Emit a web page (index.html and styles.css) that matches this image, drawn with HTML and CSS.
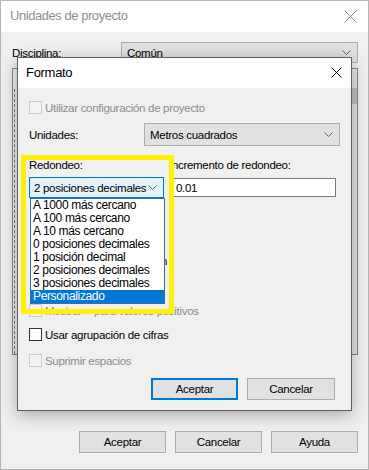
FILE: index.html
```html
<!DOCTYPE html>
<html lang="es">
<head>
<meta charset="utf-8">
<link rel="stylesheet" href="styles.css">
</head>
<body>
<div class="outer">
  <div class="titlebar">
    <span class="title">Unidades de proyecto</span>
    <svg class="oclose" width="13" height="13" viewBox="0 0 13 13"><path d="M0.5 0.5L12.5 12.5M12.5 0.5L0.5 12.5" stroke="#8a8a8a" stroke-width="1" fill="none"/></svg>
  </div>
  <div class="obody">
    <div class="orow">
      <span class="olabel">Disciplina:</span>
      <div class="combo ocombo"><span>Común</span>
        <svg class="chev" width="9" height="5" viewBox="0 0 9 5"><path d="M0.5 0.5L4.5 4.5L8.5 0.5" stroke="#606060" fill="none"/></svg>
      </div>
    </div>
    <div class="panel">
      <div class="tree"></div>
      <div class="scroll"><div class="thumb"></div></div>
    </div>
    <div class="obuttons">
      <div class="btn">Aceptar</div>
      <div class="btn">Cancelar</div>
      <div class="btn">Ayuda</div>
    </div>
  </div>

  <div class="dialog">
    <div class="dtitle">
      <span class="dtitle-text">Formato</span>
      <svg class="dclose" width="11" height="11" viewBox="0 0 11 11"><path d="M0.5 0.5L10.5 10.5M10.5 0.5L0.5 10.5" stroke="#000" stroke-width="1" fill="none"/></svg>
    </div>
    <div class="dbody">
      <div class="crow r1 disabled"><span class="cb"></span><span>Utilizar configuración de proyecto</span></div>
      <div class="urow">
        <span class="ulabel">Unidades:</span>
        <div class="combo ucombo"><span>Metros cuadrados</span>
          <svg class="chev" width="9" height="5" viewBox="0 0 9 5"><path d="M0.5 0.5L4.5 4.5L8.5 0.5" stroke="#606060" fill="none"/></svg>
        </div>
      </div>
      <div class="grid">
        <span class="glabel">Redondeo:</span>
        <span class="glabel glabel-right">Incremento de redondeo:</span>
        <div class="combo rcombo"><span>2 posiciones decimales</span>
          <svg class="chev" width="9" height="5" viewBox="0 0 9 5"><path d="M0.5 0.5L4.5 4.5L8.5 0.5" stroke="#606060" fill="none"/></svg>
        </div>
        <div class="input">0.01</div>
      </div>
      <div class="hidden-row"><span class="hidden-text">Símbolo de unidad: sin</span></div>
      <div class="crow r-mostrar disabled"><span class="cb"></span><span>Mostrar + para valores positivos</span></div>
      <div class="crow r-usar"><span class="cb"></span><span>Usar agrupación de cifras</span></div>
      <div class="crow r-sup disabled"><span class="cb"></span><span>Suprimir espacios</span></div>
      <div class="dbuttons">
        <div class="btn primary">Aceptar</div>
        <div class="btn">Cancelar</div>
      </div>
    </div>

    <div class="highlight"></div>
    <ul class="dropdown">
      <li>A 1000 más cercano</li>
      <li>A 100 más cercano</li>
      <li>A 10 más cercano</li>
      <li>0 posiciones decimales</li>
      <li>1 posición decimal</li>
      <li>2 posiciones decimales</li>
      <li>3 posiciones decimales</li>
      <li class="sel">Personalizado</li>
    </ul>
  </div>
</div>
</body>
</html>
```

FILE: styles.css
```css
* { box-sizing: border-box; }
html, body { margin: 0; padding: 0; background: #f0f0f0; }
body {
  font-family: "Liberation Sans", Arial, sans-serif;
  font-size: 11.5px;
  letter-spacing: -0.3px;
  color: #000;
}
.outer {
  position: relative;
  width: 369px;
  height: 470px;
  border: 1px solid #b5b5b5;
  background: #f0f0f0;
  display: flex;
  flex-direction: column;
}
.titlebar {
  height: 31px;
  background: #fff;
  display: flex;
  align-items: center;
  padding: 0 11px 0 9px;
}
.title {
  font-size: 13px;
  letter-spacing: -0.45px;
  color: #8f8f8f;
  flex: 1;
  margin-top: -2px;
}
.oclose { margin-top: -1px; }
.obody {
  flex: 1;
  padding: 10px 10px 0 11px;
  display: flex;
  flex-direction: column;
}
.orow {
  display: flex;
  align-items: center;
  height: 21px;
}
.olabel { width: 109px; }
.combo {
  display: flex;
  align-items: center;
  justify-content: space-between;
  background: #e1e1e1;
  border: 1px solid #adadad;
  padding: 0 6px 0 5px;
  white-space: nowrap;
}
.ocombo { flex: 1; height: 21px; }
.panel {
  margin-top: 5px;
  height: 287px;
  border: 1px solid #828790;
  background: #f0f0f0;
  display: flex;
}
.tree {
  flex: 1;
  border-left: 1px dashed #777;
  margin: 20px 0 0 1px;
}
.scroll {
  width: 5px;
  background: #e6e6e6;
  margin: 2px 0 0 0;
  padding-top: 17px;
}
.thumb { height: 16px; background: #c2c2c2; }
.obuttons {
  margin-top: 76px;
  display: flex;
  justify-content: flex-end;
  gap: 9px;
}
.btn {
  width: 87px;
  height: 22px;
  background: #e1e1e1;
  border: 1px solid #adadad;
  display: flex;
  align-items: center;
  justify-content: center;
}

/* Formato dialog */
.dialog {
  position: absolute;
  left: 16px;
  top: 56px;
  width: 335px;
  height: 354px;
  border: 1px solid #5f5f5f;
  background: #f0f0f0;
  box-shadow: 0 4px 16px rgba(0,0,0,0.3);
}
.dtitle {
  height: 30px;
  background: #fff;
  display: flex;
  align-items: center;
  padding: 0 9px 0 8px;
}
.dtitle-text { flex: 1; font-size: 13px; letter-spacing: -0.3px; margin-top: -1px; }
.dclose { margin-top: -1px; }
.dbody {
  padding: 13px 0 0 11px;
}
.crow {
  display: flex;
  align-items: center;
  height: 13px;
  gap: 3px;
  white-space: nowrap;
}
.cb {
  width: 13px;
  height: 13px;
  flex: none;
  border: 1px solid #333;
  background: #fff;
}
.disabled { color: #8d8d8d; }
.disabled .cb { border-color: #cccccc; background: #f3f3f3; }
.urow {
  margin-top: 9px;
  height: 23px;
  display: flex;
  align-items: center;
}
.ulabel { width: 115px; }
.ucombo { width: 196px; height: 23px; }
.grid {
  margin-top: 11px;
  display: grid;
  grid-template-columns: 135px 164px;
  grid-template-rows: 16px 21px;
  column-gap: 8px;
  row-gap: 4px;
  align-items: center;
}
.glabel { white-space: nowrap; }
.glabel-right { margin-left: -3px; }
.rcombo {
  height: 21px;
  background: #e5f1fb;
  border-color: #0078d7;
  padding-left: 4px;
}
.input {
  height: 19px;
  background: #fff;
  border: 1px solid #7a7a7a;
  padding-left: 3px;
  display: flex;
  align-items: center;
}
.hidden-row {
  margin-top: 57px;
  height: 16px;
  width: 138px;
  text-align: right;
  overflow: hidden;
  white-space: nowrap;
}
.r-mostrar { margin-top: 33px; }
.r-usar { margin-top: 11px; }
.r-sup { margin-top: 13px; }
.dbuttons {
  margin-top: 11px;
  display: flex;
  justify-content: flex-end;
  gap: 9px;
  padding-right: 16px;
}
.dbuttons .btn { width: 88px; }
.dbuttons .btn.primary { width: 87px; border: 2px solid #0078d7; }

.highlight {
  position: absolute;
  left: 3px;
  top: 97px;
  width: 153px;
  height: 159px;
  border: 5px solid #fff200;
}
.dropdown {
  position: absolute;
  left: 12px;
  top: 140px;
  width: 135px;
  height: 106px;
  margin: 0;
  padding: 0;
  list-style: none;
  background: #fff;
  border: 1px solid #3a6ea5;
}
.dropdown li {
  height: 13px;
  line-height: 13px;
  padding-left: 2px;
  white-space: nowrap;
  font-size: 12px;
  letter-spacing: -0.35px;
}
.dropdown li.sel { background: #0078d7; color: #fff; }
```
